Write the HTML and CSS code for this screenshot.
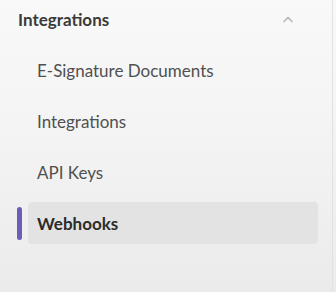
FILE: index.html
```html
<!DOCTYPE html>
<html lang="en">
<head>
  <meta charset="UTF-8" />
  <title>Integrations</title>
  <link rel="stylesheet" href="styles.css">
</head>
<body>
  <nav class="sidebar">
    <div class="section-head">
      <span>Integrations</span>
      <svg class="chevron" width="12" height="8" viewBox="0 0 12 8"><path d="M2 6.5 L6 2.5 L10 6.5" fill="none" stroke="#b5b5b5" stroke-width="1.6" stroke-linecap="round" stroke-linejoin="round"/></svg>
    </div>
    <ul class="menu">
      <li class="item">E-Signature Documents</li>
      <li class="item">Integrations</li>
      <li class="item">API Keys</li>
      <li class="item active">Webhooks</li>
    </ul>
  </nav>
</body>
</html>
```

FILE: styles.css
```css
html, body {
  margin: 0;
  height: 100%;
}
body {
  background: linear-gradient(#f9f9f9, #f3f3f3 50%, #ebebeb);
  font-family: Lato, "Open Sans", sans-serif;
  color: #505050;
}
.sidebar {
  width: 333px;
  height: 292px;
  border-right: 1px solid #e2e2e2;
  box-sizing: border-box;
}
.section-head {
  display: flex;
  align-items: center;
  justify-content: space-between;
  padding: 8px 38px 0 18px;
  height: 22px;
  font-size: 17px;
  font-weight: 700;
  color: #3a3a3a;
}
.menu {
  list-style: none;
  margin: 0;
  padding: 19px 14px 0 17px;
}
.item {
  position: relative;
  display: flex;
  align-items: center;
  height: 42px;
  margin-bottom: 9px;
  margin-left: 11px;
  padding-left: 9px;
  font-size: 17px;
  border-radius: 4px;
}
.item.active {
  background: #e3e3e3;
  font-weight: 700;
  color: #2c2c2c;
}
.item.active::before {
  content: "";
  position: absolute;
  left: -11px;
  top: 5px;
  width: 5px;
  height: 33px;
  border-radius: 3px;
  background: #6a5fb8;
}
```
